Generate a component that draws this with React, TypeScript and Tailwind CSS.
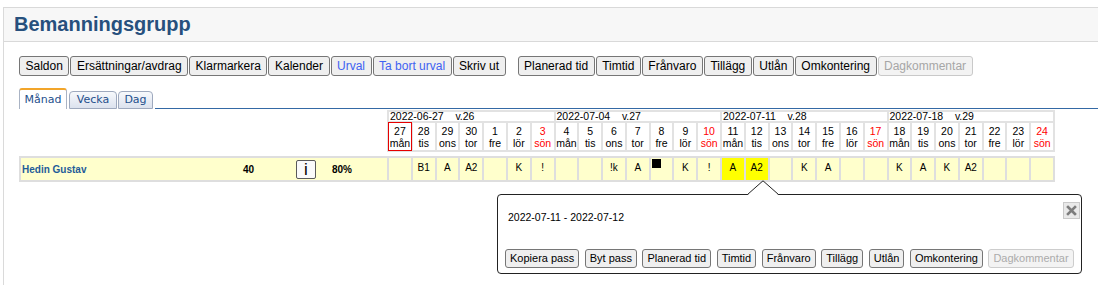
const wd = ["mån", "tis", "ons", "tor", "fre", "lör", "sön"];

const weeks = [
  { start: "2022-06-27", v: "v.26", days: [27, 28, 29, 30, 1, 2, 3] },
  { start: "2022-07-04", v: "v.27", days: [4, 5, 6, 7, 8, 9, 10] },
  { start: "2022-07-11", v: "v.28", days: [11, 12, 13, 14, 15, 16, 17] },
  { start: "2022-07-18", v: "v.29", days: [18, 19, 20, 21, 22, 23, 24] },
];

const shifts = [
  "", "B1", "A", "A2", "", "K", "!",
  "", "", "!k", "A", "#", "K", "!",
  "A", "A2", "", "K", "A", "", "",
  "K", "A", "K", "A2", "", "", "",
];

const selected = [14, 15];

const toolbarLeft = ["Saldon", "Ersättningar/avdrag", "Klarmarkera", "Kalender", "Urval", "Ta bort urval", "Skriv ut"];
const toolbarRight = ["Planerad tid", "Timtid", "Frånvaro", "Tillägg", "Utlån", "Omkontering"];
const popupButtons = ["Kopiera pass", "Byt pass", "Planerad tid", "Timtid", "Frånvaro", "Tillägg", "Utlån", "Omkontering"];

const ToolBtn = ({ label }: { label: string }) => {
  const blue = label === "Urval" || label === "Ta bort urval";
  return (
    <button
      className={
        blue
          ? "h-[20px] px-[5.5px] bg-[#efefef] border border-[#767676] rounded-[3px] text-[12px] leading-[18px] whitespace-nowrap text-[#4062f2]"
          : "h-[20px] px-[5.5px] bg-[#efefef] border border-[#767676] rounded-[3px] text-[12px] leading-[18px] whitespace-nowrap text-black"
      }
    >
      {label}
    </button>
  );
};

const PopBtn = ({ label }: { label: string }) => (
  <button className="h-[19px] px-[4px] bg-[#efefef] border border-[#767676] rounded-[3px] text-[11px] leading-[17px] whitespace-nowrap text-black">
    {label}
  </button>
);

export default function App() {
  return (
    <div className="relative w-[1098px] h-[285px] overflow-hidden bg-white pt-[7px] pl-[3px] font-['Liberation_Sans',Arial,sans-serif]">
      <div className="h-full border-l border-[#dadada]">
        {/* title bar */}
        <div className="h-[35px] flex items-center pl-[10px] bg-[#f7f7f7] border-t border-b border-[#d9d9d9]">
          <h1 className="text-[20px] leading-[23px] font-bold text-[#27507d]">Bemanningsgrupp</h1>
        </div>

        <div className="pl-[15px]">
          {/* toolbar */}
          <div className="mt-[14px] flex gap-[12px]">
            <div className="flex gap-[1px]">
              {toolbarLeft.map((b) => (
                <ToolBtn key={b} label={b} />
              ))}
            </div>
            <div className="flex gap-[1px]">
              {toolbarRight.map((b) => (
                <ToolBtn key={b} label={b} />
              ))}
              <button className="h-[20px] px-[5.5px] bg-[#f3f3f3] border border-[#c9c9c9] rounded-[3px] text-[12px] leading-[18px] whitespace-nowrap text-[#a6a6a6]">
                Dagkommentar
              </button>
            </div>
          </div>

          {/* tabs */}
          <div className="mt-[12px] h-[21px] flex items-end gap-[2px] font-['DejaVu_Sans',sans-serif] text-[11px] leading-[13px]">
            <div className="h-[21px] w-[48px] pt-[3px] text-center bg-white text-[#1e4f8c] border-t-2 border-t-[#f2a52a] border-x border-x-[#a9b3c4] rounded-t-[3px]">
              Månad
            </div>
            <div className="h-[18px] w-[48px] pt-[1px] text-center text-[#1e4f8c] bg-linear-to-b from-[#f7f9fc] to-[#dce2ee] border border-[#9ea9be] rounded-t-[4px]">
              Vecka
            </div>
            <div className="h-[18px] w-[35px] -ml-[1px] pt-[1px] text-center text-[#1e4f8c] bg-linear-to-b from-[#f7f9fc] to-[#dce2ee] border border-[#9ea9be] rounded-t-[4px]">
              Dag
            </div>
            <div className="flex-1 h-full border-b border-[#3469a5]" />
          </div>

          {/* calendar header */}
          <div className="ml-[368px] mt-[1px] w-[668px] grid grid-cols-[repeat(28,minmax(0,1fr))] gap-[2px] p-[2px] bg-[#e2e2e2] text-[10.5px]">
            {weeks.map((w) => (
              <div key={w.start} className="col-span-7 h-[9px] bg-white pl-[1px] leading-[9px] whitespace-nowrap text-black">
                {w.start}&nbsp;&nbsp;&nbsp;&nbsp;{w.v}
              </div>
            ))}
            {weeks.map((w) =>
              w.days.map((d, i) => (
                <div
                  key={w.start + d}
                  className={
                    w.start === "2022-06-27" && i === 0
                      ? "h-[27px] bg-white flex flex-col items-center justify-center leading-[12px] text-black outline outline-[#e60000]"
                      : i === 6
                        ? "h-[27px] bg-white flex flex-col items-center justify-center leading-[12px] text-[#ff0000]"
                        : "h-[27px] bg-white flex flex-col items-center justify-center leading-[12px] text-black"
                  }
                >
                  <span>{d}</span>
                  <span>{wd[i]}</span>
                </div>
              ))
            )}
          </div>

          {/* employee row */}
          <div className="mt-[4px] w-[1036px] grid grid-cols-[366px_repeat(28,minmax(0,1fr))] gap-[2px] p-[2px] bg-[#dedede] text-[10px]">
            <div className="h-[22px] bg-[#ffffcc] flex items-center pl-[1px] font-bold">
              <span className="w-[221px] text-[#1f5c99]">Hedin Gustav</span>
              <span className="w-[53px] text-black">40</span>
              <button className="w-[20px] h-[19px] bg-[#fafafa] border border-[#5a5a5a] rounded-[2px] text-[17px] leading-[17px] font-normal text-black">
                i
              </button>
              <span className="ml-[16px] text-black">80%</span>
            </div>
            {shifts.map((s, i) => (
              <div
                key={i}
                className={
                  selected.includes(i)
                    ? "h-[22px] bg-[#ffff00] pt-[4px] text-center leading-[12px] text-black"
                    : "h-[22px] bg-[#ffffcc] pt-[4px] text-center leading-[12px] text-black"
                }
              >
                {s === "#" ? <div className="ml-[1px] -mt-[3px] w-[9px] h-[9px] bg-black" /> : s}
              </div>
            ))}
          </div>
        </div>
      </div>

      {/* popup for selected cells */}
      <div className="absolute left-[497px] top-[194px] w-[585px] h-[80px] bg-white border border-[#222] rounded-[4px]">
        <div className="pt-[16px] pl-[10px] text-[10.5px] leading-[12px] text-black">2022-07-11 - 2022-07-12</div>
        <div className="mt-[26px] pl-[7px] flex gap-[5.5px]">
          {popupButtons.map((b) => (
            <PopBtn key={b} label={b} />
          ))}
          <button className="h-[19px] px-[4px] bg-[#f3f3f3] border border-[#cdcdcd] rounded-[3px] text-[11px] leading-[17px] whitespace-nowrap text-[#ababab]">
            Dagkommentar
          </button>
        </div>
        <button className="absolute top-[7px] right-[1px] w-[17px] h-[17px] bg-[#e9e9e9] border border-[#c9c9c9] flex items-center justify-center">
          <svg width="11" height="11" viewBox="0 0 11 11">
            <path d="M2 2 L9 9 M9 2 L2 9" stroke="#7d7d7d" strokeWidth="2.6" strokeLinecap="square" />
          </svg>
        </button>
      </div>
      <svg className="absolute left-[747px] top-[180px]" width="32" height="16" viewBox="0 0 32 16">
        <path d="M0 15.5 L16 1 L32 15.5 Z" fill="#fff" />
        <path d="M0.5 14.5 L16 0.8 L31.5 14.5" fill="none" stroke="#222" strokeWidth="1" />
      </svg>
    </div>
  );
}
